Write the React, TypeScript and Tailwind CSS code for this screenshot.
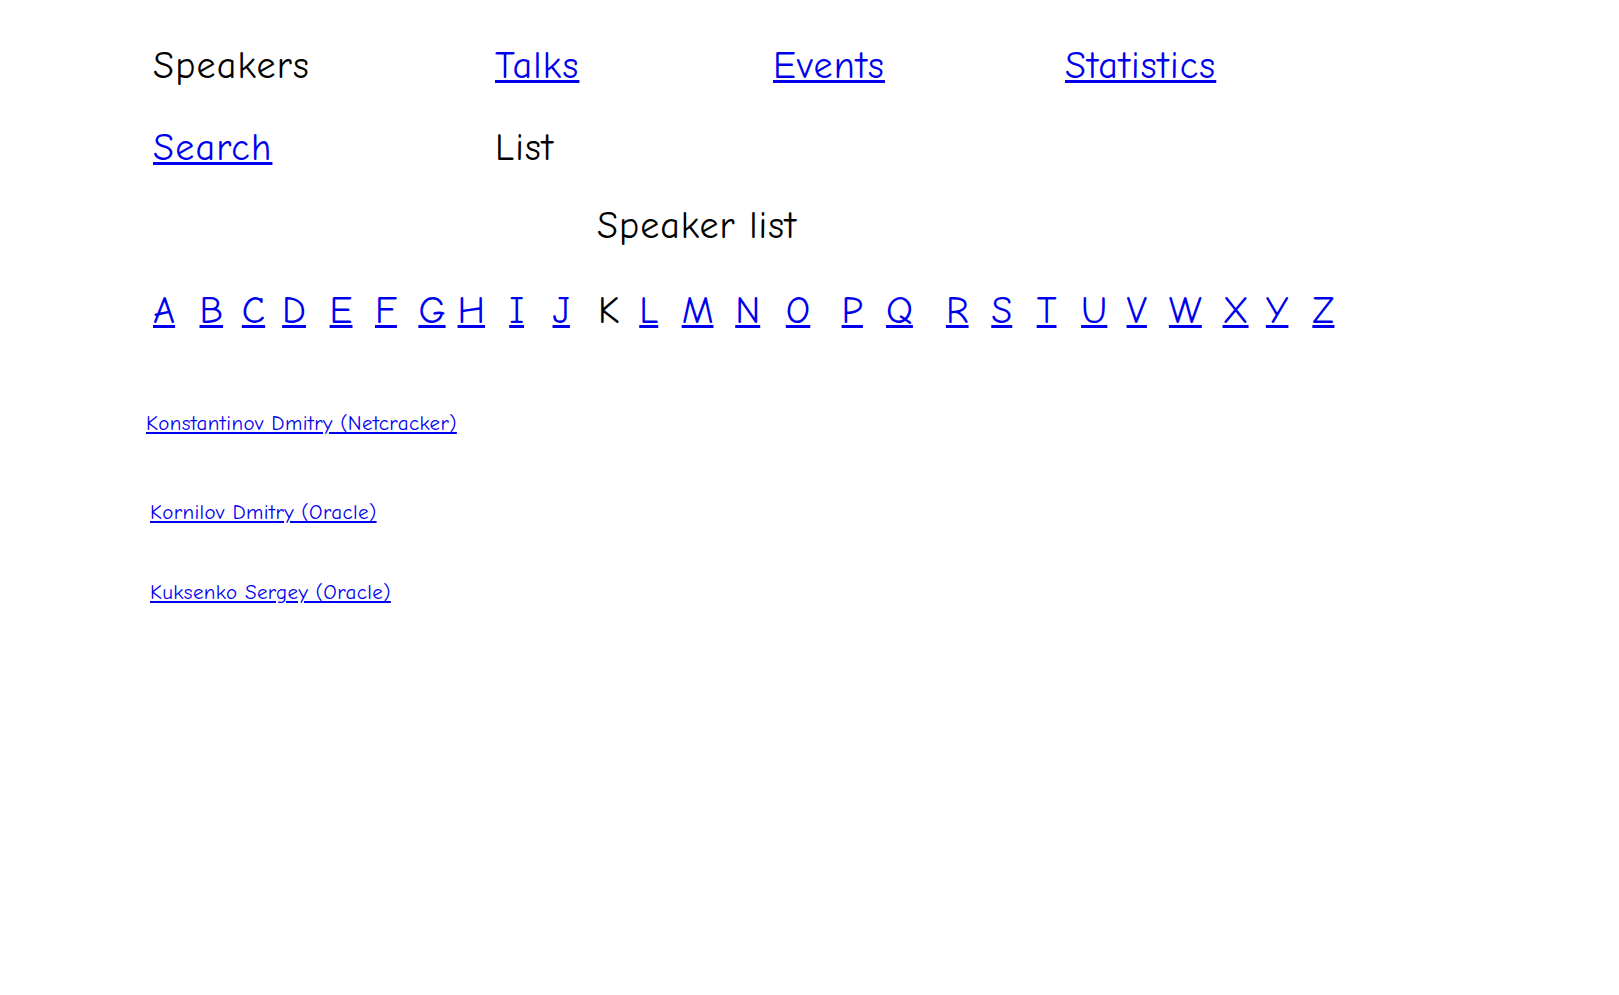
import React from "react";

const nav1 = [
  { label: "Speakers", link: false, w: "w-[342px]" },
  { label: "Talks", link: true, w: "w-[278px]" },
  { label: "Events", link: true, w: "w-[292px]" },
  { label: "Statistics", link: true, w: "w-[300px]" },
];
const nav2 = [
  { label: "Search", link: true, w: "w-[342px]" },
  { label: "List", link: false, w: "w-[278px]" },
];

const letters: { l: string; w: string }[] = [
  { l: "A", w: "w-[46.5px]" },
  { l: "B", w: "w-[42.3px]" },
  { l: "C", w: "w-[40.3px]" },
  { l: "D", w: "w-[47.5px]" },
  { l: "E", w: "w-[45.4px]" },
  { l: "F", w: "w-[43.4px]" },
  { l: "G", w: "w-[39.2px]" },
  { l: "H", w: "w-[51.6px]" },
  { l: "I", w: "w-[43.4px]" },
  { l: "J", w: "w-[45.4px]" },
  { l: "K", w: "w-[41.3px]" },
  { l: "L", w: "w-[42.4px]" },
  { l: "M", w: "w-[53.6px]" },
  { l: "N", w: "w-[50.6px]" },
  { l: "O", w: "w-[55.8px]" },
  { l: "P", w: "w-[44.4px]" },
  { l: "Q", w: "w-[59.9px]" },
  { l: "R", w: "w-[45.4px]" },
  { l: "S", w: "w-[45.4px]" },
  { l: "T", w: "w-[44.4px]" },
  { l: "U", w: "w-[45.5px]" },
  { l: "V", w: "w-[42.3px]" },
  { l: "W", w: "w-[53.7px]" },
  { l: "X", w: "w-[43.3px]" },
  { l: "Y", w: "w-[46.5px]" },
  { l: "Z", w: "w-[30px]" },
];

const speakers = [
  { name: "Konstantinov Dmitry (Netcracker)", pad: "pl-[146px]", h: "h-[89px]" },
  { name: "Kornilov Dmitry (Oracle)", pad: "pl-[150px]", h: "h-[80px]" },
  { name: "Kuksenko Sergey (Oracle)", pad: "pl-[150px]", h: "h-[80px]" },
];

const font = "font-['Comic_Sans_MS','Comic_Neue','DejaVu_Sans',sans-serif]";

export default function App() {
  return (
    <div className={`min-h-[995px] w-full bg-white text-black ${font}`}>
      <div className="pt-[25px]">
        <div className="flex h-[82px] items-center pl-[153px] text-[38px] tracking-[1.2px]">
          {nav1.map((n) => (
            <div key={n.label} className={n.w}>
              {n.link ? (
                <a href="#" className="text-[#0000ee] underline">
                  {n.label}
                </a>
              ) : (
                <span>{n.label}</span>
              )}
            </div>
          ))}
        </div>
        <div className="flex h-[82px] items-center pl-[153px] text-[38px] tracking-[1.2px]">
          {nav2.map((n) => (
            <div key={n.label} className={n.w}>
              {n.link ? (
                <a href="#" className="text-[#0000ee] underline">
                  {n.label}
                </a>
              ) : (
                <span>{n.label}</span>
              )}
            </div>
          ))}
        </div>
        <div className="flex h-[74px] items-center pl-[597px] text-[38px] tracking-[1px]">
          Speaker list
        </div>
        <div className="flex h-[97px] items-center pl-[153px] text-[38px]">
          {letters.map((x) => (
            <div key={x.l} className={x.w}>
              {x.l === "K" ? (
                <span>{x.l}</span>
              ) : (
                <a href="#" className="text-[#0000ee] underline">
                  {x.l}
                </a>
              )}
            </div>
          ))}
        </div>
        <div className="h-[48px]" />
        {speakers.map((s) => (
          <div key={s.name} className={`${s.pad} ${s.h} text-[21px] tracking-[0.4px]`}>
            <a href="#" className="text-[#0000ee] underline">
              {s.name}
            </a>
          </div>
        ))}
      </div>
    </div>
  );
}
